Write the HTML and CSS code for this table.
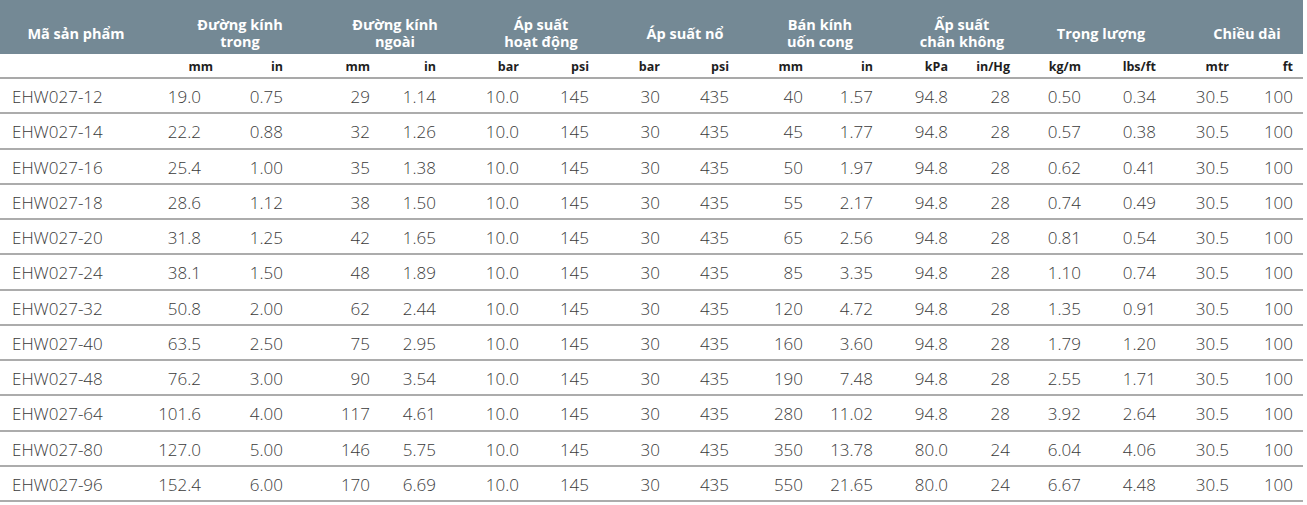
FILE: index.html
```html
<!DOCTYPE html>
<html lang="vi">
<head>
<meta charset="utf-8">
<title>EHW027</title>
<link rel="stylesheet" href="styles.css">
</head>
<body>
<div class="spec">
  <div class="head">
    <div class="hcell g0">Mã sản phẩm</div>
    <div class="hcell g1">Đường kính<br>trong</div>
    <div class="hcell g2">Đường kính<br>ngoài</div>
    <div class="hcell g3">Áp suất<br>hoạt động</div>
    <div class="hcell g4">Áp suất nổ</div>
    <div class="hcell g5">Bán kính<br>uốn cong</div>
    <div class="hcell g6">Ấp suất<br>chân không</div>
    <div class="hcell g7">Trọng lượng</div>
    <div class="hcell g8">Chiều dài</div>
  </div>
  <div class="units">
    <div></div>
    <div>mm</div><div>in</div>
    <div>mm</div><div>in</div>
    <div>bar</div><div>psi</div>
    <div>bar</div><div>psi</div>
    <div>mm</div><div>in</div>
    <div>kPa</div><div>in/Hg</div>
    <div>kg/m</div><div>lbs/ft</div>
    <div>mtr</div><div>ft</div>
  </div>
  <div class="row"><div>EHW027-12</div><div>19.0</div><div>0.75</div><div>29</div><div>1.14</div><div>10.0</div><div>145</div><div>30</div><div>435</div><div>40</div><div>1.57</div><div>94.8</div><div>28</div><div>0.50</div><div>0.34</div><div>30.5</div><div>100</div></div>
  <div class="row"><div>EHW027-14</div><div>22.2</div><div>0.88</div><div>32</div><div>1.26</div><div>10.0</div><div>145</div><div>30</div><div>435</div><div>45</div><div>1.77</div><div>94.8</div><div>28</div><div>0.57</div><div>0.38</div><div>30.5</div><div>100</div></div>
  <div class="row"><div>EHW027-16</div><div>25.4</div><div>1.00</div><div>35</div><div>1.38</div><div>10.0</div><div>145</div><div>30</div><div>435</div><div>50</div><div>1.97</div><div>94.8</div><div>28</div><div>0.62</div><div>0.41</div><div>30.5</div><div>100</div></div>
  <div class="row"><div>EHW027-18</div><div>28.6</div><div>1.12</div><div>38</div><div>1.50</div><div>10.0</div><div>145</div><div>30</div><div>435</div><div>55</div><div>2.17</div><div>94.8</div><div>28</div><div>0.74</div><div>0.49</div><div>30.5</div><div>100</div></div>
  <div class="row"><div>EHW027-20</div><div>31.8</div><div>1.25</div><div>42</div><div>1.65</div><div>10.0</div><div>145</div><div>30</div><div>435</div><div>65</div><div>2.56</div><div>94.8</div><div>28</div><div>0.81</div><div>0.54</div><div>30.5</div><div>100</div></div>
  <div class="row"><div>EHW027-24</div><div>38.1</div><div>1.50</div><div>48</div><div>1.89</div><div>10.0</div><div>145</div><div>30</div><div>435</div><div>85</div><div>3.35</div><div>94.8</div><div>28</div><div>1.10</div><div>0.74</div><div>30.5</div><div>100</div></div>
  <div class="row"><div>EHW027-32</div><div>50.8</div><div>2.00</div><div>62</div><div>2.44</div><div>10.0</div><div>145</div><div>30</div><div>435</div><div>120</div><div>4.72</div><div>94.8</div><div>28</div><div>1.35</div><div>0.91</div><div>30.5</div><div>100</div></div>
  <div class="row"><div>EHW027-40</div><div>63.5</div><div>2.50</div><div>75</div><div>2.95</div><div>10.0</div><div>145</div><div>30</div><div>435</div><div>160</div><div>3.60</div><div>94.8</div><div>28</div><div>1.79</div><div>1.20</div><div>30.5</div><div>100</div></div>
  <div class="row"><div>EHW027-48</div><div>76.2</div><div>3.00</div><div>90</div><div>3.54</div><div>10.0</div><div>145</div><div>30</div><div>435</div><div>190</div><div>7.48</div><div>94.8</div><div>28</div><div>2.55</div><div>1.71</div><div>30.5</div><div>100</div></div>
  <div class="row"><div>EHW027-64</div><div>101.6</div><div>4.00</div><div>117</div><div>4.61</div><div>10.0</div><div>145</div><div>30</div><div>435</div><div>280</div><div>11.02</div><div>94.8</div><div>28</div><div>3.92</div><div>2.64</div><div>30.5</div><div>100</div></div>
  <div class="row"><div>EHW027-80</div><div>127.0</div><div>5.00</div><div>146</div><div>5.75</div><div>10.0</div><div>145</div><div>30</div><div>435</div><div>350</div><div>13.78</div><div>80.0</div><div>24</div><div>6.04</div><div>4.06</div><div>30.5</div><div>100</div></div>
  <div class="row"><div>EHW027-96</div><div>152.4</div><div>6.00</div><div>170</div><div>6.69</div><div>10.0</div><div>145</div><div>30</div><div>435</div><div>550</div><div>21.65</div><div>80.0</div><div>24</div><div>6.67</div><div>4.48</div><div>30.5</div><div>100</div></div>
</div>
</body>
</html>
```

FILE: styles.css
```css
html, body {
  margin: 0;
  padding: 0;
  background: #ffffff;
}

.spec {
  width: 1303px;
  font-family: "Open Sans", "Noto Sans", "DejaVu Sans", sans-serif;
}

.head,
.units,
.row {
  display: grid;
  grid-template-columns: 152px 71px 70px 87px 66px 83px 70px 71px 69px 74px 70px 75px 62px 71px 75px 73px 64px;
}

.head {
  height: 54px;
  background: #748995;
  color: #ffffff;
  font-weight: 700;
  font-size: 14.5px;
  line-height: 17px;
  box-sizing: border-box;
  padding-top: 12px;
}

.hcell {
  grid-column: span 2;
  display: flex;
  align-items: center;
  justify-content: center;
  text-align: center;
}

.hcell.g0 { grid-column: span 1; }
.g1 { padding-left: 35px; }
.g2 { padding-left: 51px; }
.g3 { padding-left: 37px; }
.g4 { padding-left: 32px; }
.g5 { padding-left: 18px; }
.g6 { padding-left: 21px; }
.g7 { padding-left: 16px; }
.g8 { padding-left: 25px; }

.units {
  height: 25px;
  box-sizing: border-box;
  border-bottom: 2px solid #a9a9a9;
  font-weight: 700;
  font-size: 12.5px;
  color: #1e1e1e;
  align-items: center;
  padding-top: 2px;
}

.units > div,
.row > div {
  text-align: right;
  padding-right: 10px;
}

.row {
  height: 35.25px;
  box-sizing: border-box;
  border-bottom: 2px solid #acacac;
  font-weight: 300;
  font-size: 17px;
  color: #3a3a3a;
  align-items: center;
  padding-top: 2px;
}

.row > div:first-child {
  text-align: left;
  padding-left: 12px;
  padding-right: 0;
}

.row > div:nth-child(2) {
  padding-right: 22px;
}
```
